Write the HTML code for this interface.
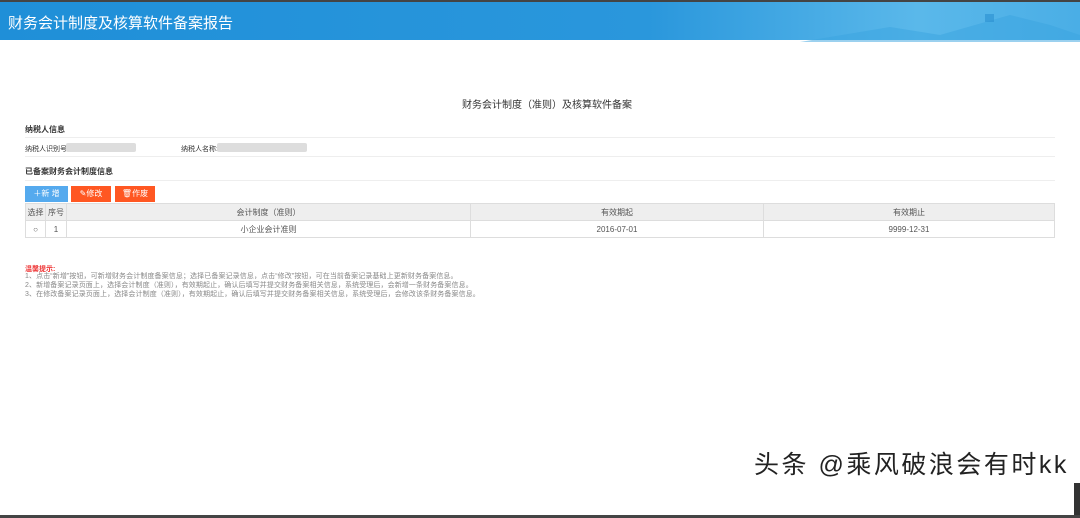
<!DOCTYPE html><html><head><meta charset="utf-8"><style>
body{margin:0;width:1080px;height:518px;overflow:hidden;background:#fff;font-family:"Liberation Sans","Noto Sans CJK SC",sans-serif;position:relative}
.a{position:absolute}
.hd{left:0;top:0;width:1080px;height:40px;background:linear-gradient(90deg,#1f8fd8 0%,#2a97dc 60%,#5ab8ea 85%,#4aaee6 100%);border-top:2px solid #444;box-sizing:border-box}
.t{font-size:10px;color:#333}
.s{font-size:7px;color:#333}
.line{height:1px;background:#eee}
.btn{top:186px;height:16px;font-size:8px;color:#fff;text-align:center;line-height:16px}
table{border-collapse:collapse;font-size:8px;color:#555;position:absolute;left:25px;top:203px;width:1030px}
td{border:1px solid #ddd;height:16px;text-align:center;padding:0}
tr:first-child td{background:#eee}
.g{font-size:7px;color:#888;line-height:9px;letter-spacing:.1px}
.blur{background:#ddd;height:9px;border-radius:2px}
</style></head><body>
<div class="a hd"><svg class="a" style="left:800px;top:5px" width="280" height="35"><path d="M0 35 L90 20 L140 28 L210 8 L250 18 L280 28 L280 35Z" fill="#3aa3e0" opacity=".5"/><rect x="185" y="7" width="9" height="8" fill="#2a8fd0" opacity=".6"/></svg><div class="a" style="left:8px;top:10px;font-size:15px;color:#fff">财务会计制度及核算软件备案报告</div></div>
<div class="a t" style="left:462px;top:96px">财务会计制度（准则）及核算软件备案</div>
<div class="a t" style="left:25px;top:124px;font-weight:bold;font-size:8px">纳税人信息</div>
<div class="a line" style="left:25px;top:137px;width:1030px"></div>
<div class="a s" style="left:25px;top:144px">纳税人识别号:</div>
<div class="a blur" style="left:66px;top:143px;width:70px"></div>
<div class="a s" style="left:181px;top:144px">纳税人名称:</div>
<div class="a blur" style="left:217px;top:143px;width:90px"></div>
<div class="a line" style="left:25px;top:156px;width:1030px"></div>
<div class="a t" style="left:25px;top:166px;font-weight:bold;font-size:8px">已备案财务会计制度信息</div>
<div class="a line" style="left:25px;top:180px;width:1030px"></div>
<div class="a btn" style="left:25px;width:43px;background:#55aaee">＋新 增</div>
<div class="a btn" style="left:71px;width:40px;background:#ff5722">✎修改</div>
<div class="a btn" style="left:115px;width:40px;background:#ff5722">🗑作废</div>
<table><tr><td style="width:19px">选择</td><td style="width:20px">序号</td><td style="width:403px">会计制度（准则）</td><td style="width:292px">有效期起</td><td>有效期止</td></tr>
<tr><td>○</td><td>1</td><td>小企业会计准则</td><td>2016-07-01</td><td>9999-12-31</td></tr></table>
<div class="a" style="left:25px;top:264px;font-size:7px;color:#e33;font-weight:bold">温馨提示:</div>
<div class="a g" style="left:25px;top:272px">1、点击“新增”按钮，可新增财务会计制度备案信息；选择已备案记录信息，点击“修改”按钮，可在当前备案记录基础上更新财务备案信息。<br>2、新增备案记录页面上，选择会计制度（准则），有效期起止，确认后填写并提交财务备案相关信息，系统受理后，会新增一条财务备案信息。<br>3、在修改备案记录页面上，选择会计制度（准则），有效期起止，确认后填写并提交财务备案相关信息，系统受理后，会修改该条财务备案信息。</div>
<div class="a" style="left:754px;top:445px;font-size:25px;letter-spacing:2.5px;color:#222;text-shadow:1px 1px 0 #fff,-1px -1px 0 #fff">头条 @乘风破浪会有时kk</div>
<div class="a" style="left:1074px;top:483px;width:6px;height:33px;background:#333"></div>
<div class="a" style="left:0;top:515px;width:1080px;height:3px;background:#444"></div>
</body></html>
